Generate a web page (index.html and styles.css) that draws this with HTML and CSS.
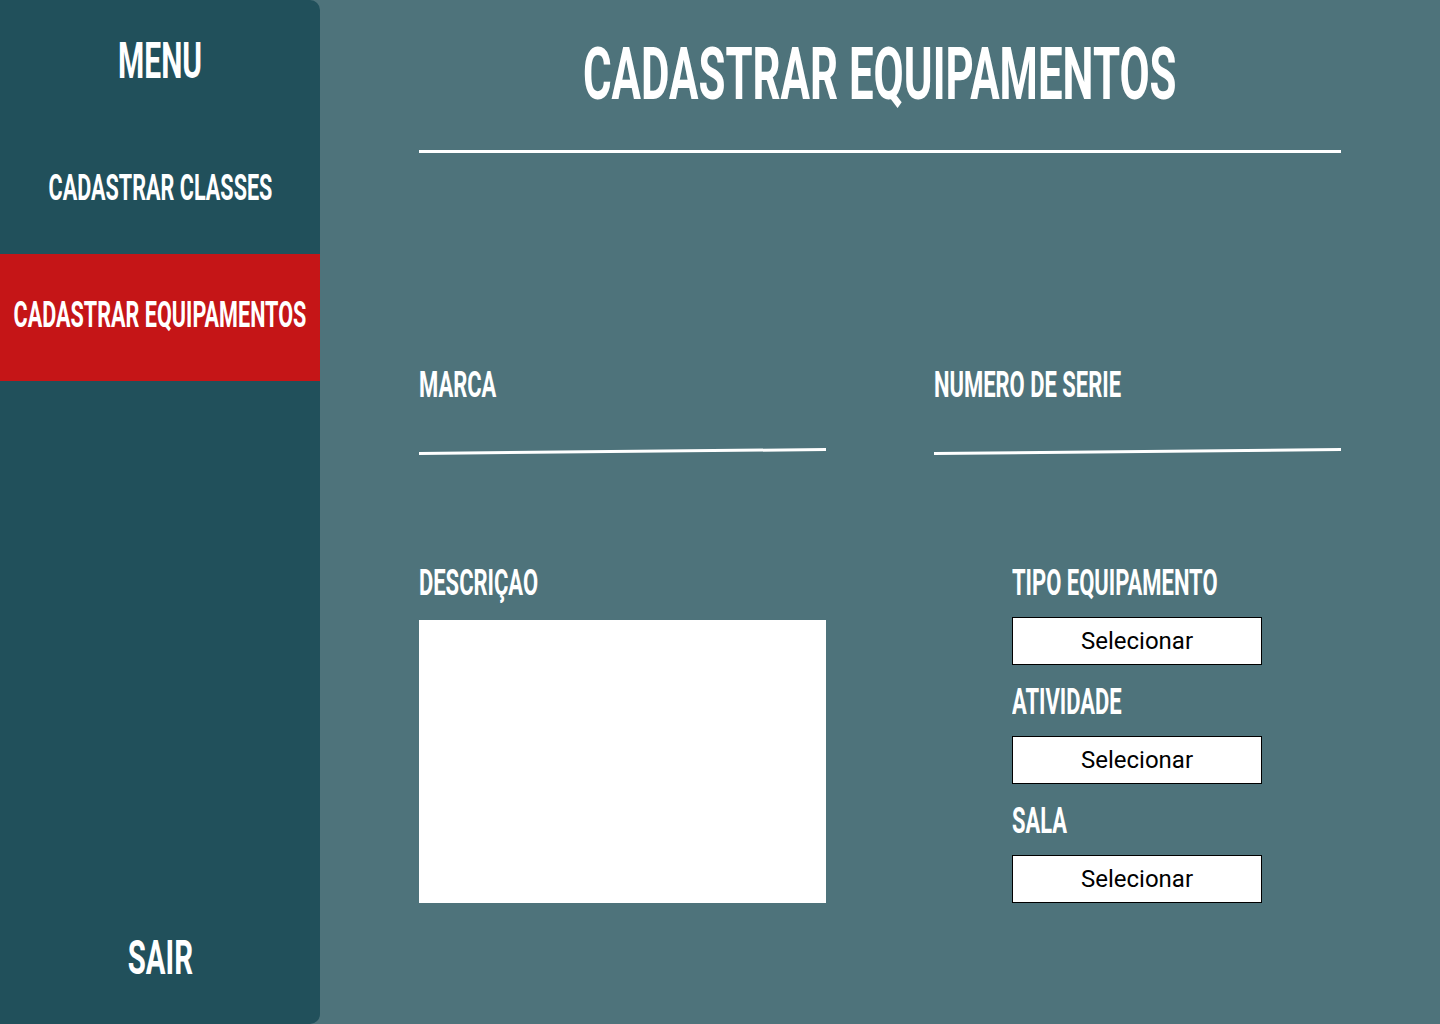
FILE: index.html
```html
<!DOCTYPE html>
<html lang="pt">
<head>
<meta charset="utf-8">
<title>Cadastrar Equipamentos</title>
<link rel="stylesheet" href="styles.css">
</head>
<body>
<aside class="sidebar">
  <div class="menu-title"><span class="cond">MENU</span></div>
  <a class="nav-item"><span class="cond">CADASTRAR CLASSES</span></a>
  <a class="nav-item active"><span class="cond">CADASTRAR EQUIPAMENTOS</span></a>
  <div class="spacer"></div>
  <a class="sair"><span class="cond">SAIR</span></a>
</aside>
<main class="content">
  <h1 class="page-title"><span class="cond">CADASTRAR EQUIPAMENTOS</span></h1>
  <div class="rule"></div>
  <div class="row row-top">
    <div class="field">
      <label class="label"><span class="cond-l">MARCA</span></label>
      <div class="underline"></div>
    </div>
    <div class="field">
      <label class="label"><span class="cond-l">NUMERO DE SERIE</span></label>
      <div class="underline"></div>
    </div>
  </div>
  <div class="row row-bottom">
    <div class="field">
      <label class="label"><span class="cond-l">DESCRIÇAO</span></label>
      <div class="textarea"></div>
    </div>
    <div class="field selects">
      <div class="select-group">
        <label class="label"><span class="cond-l">TIPO EQUIPAMENTO</span></label>
        <div class="select">Selecionar</div>
        <label class="label"><span class="cond-l">ATIVIDADE</span></label>
        <div class="select">Selecionar</div>
        <label class="label"><span class="cond-l">SALA</span></label>
        <div class="select">Selecionar</div>
      </div>
    </div>
  </div>
</main>
</body>
</html>
```
FILE: styles.css
```css
* { box-sizing: border-box; }
html, body { margin: 0; padding: 0; }
body {
  width: 1440px;
  height: 1024px;
  background: #4e737b;
  display: flex;
  font-family: Roboto, "Liberation Sans", sans-serif;
  color: #fff;
  overflow: hidden;
}
.cond, .cond-l {
  display: inline-block;
  font-weight: 700;
  white-space: nowrap;
  transform: scaleX(0.6);
  transform-origin: center;
  flex-shrink: 0;
}
.cond-l { transform: scaleX(0.61); transform-origin: left center; }

.sidebar {
  flex: 0 0 320px;
  width: 320px;
  height: 1024px;
  background: #21505b;
  border-radius: 0 10px 10px 0;
  display: flex;
  flex-direction: column;
  overflow: hidden;
}
.menu-title, .nav-item, .sair {
  display: flex;
  justify-content: center;
  color: #fff;
  text-decoration: none;
}
.menu-title {
  height: 127px;
  line-height: 122px;
  font-size: 50px;
}
.nav-item {
  height: 127px;
  line-height: 122px;
  font-size: 36px;
}
.nav-item.active { background: #c51517; }
.spacer { flex: 1; }
.sair {
  height: 130px;
  line-height: 128px;
  font-size: 49px;
}

.content {
  flex: 1 1 0;
  min-width: 0;
  padding: 0 99px;
  display: flex;
  flex-direction: column;
}
.page-title {
  margin: 0;
  height: 150px;
  line-height: 148px;
  display: flex;
  justify-content: center;
  font-size: 73px;
  font-weight: 700;
}
.rule { height: 3px; background: #fff; }

.row {
  display: grid;
  grid-template-columns: 407px 407px;
  justify-content: space-between;
}
.row-top { margin-top: 212px; }
.row-bottom { margin-top: 110px; }

.label {
  display: block;
  height: 40px;
  line-height: 40px;
  font-size: 36px;
}
.underline {
  margin-top: 45px;
  height: 3px;
  background: #fff;
  transform: rotate(-0.56deg);
}
.textarea {
  margin-top: 17px;
  height: 283px;
  background: #fff;
}
.selects {
  display: flex;
  padding-left: 78px;
}
.select-group {
  width: 250px;
  display: flex;
  flex-direction: column;
}
.select-group .label + .select { margin-top: 14px; }
.select-group .select + .label { margin-top: 17px; }
.select {
  height: 48px;
  background: #fff;
  border: 1px solid #000;
  color: #000;
  font-size: 24px;
  line-height: 46px;
  text-align: center;
  font-weight: 400;
}
```
